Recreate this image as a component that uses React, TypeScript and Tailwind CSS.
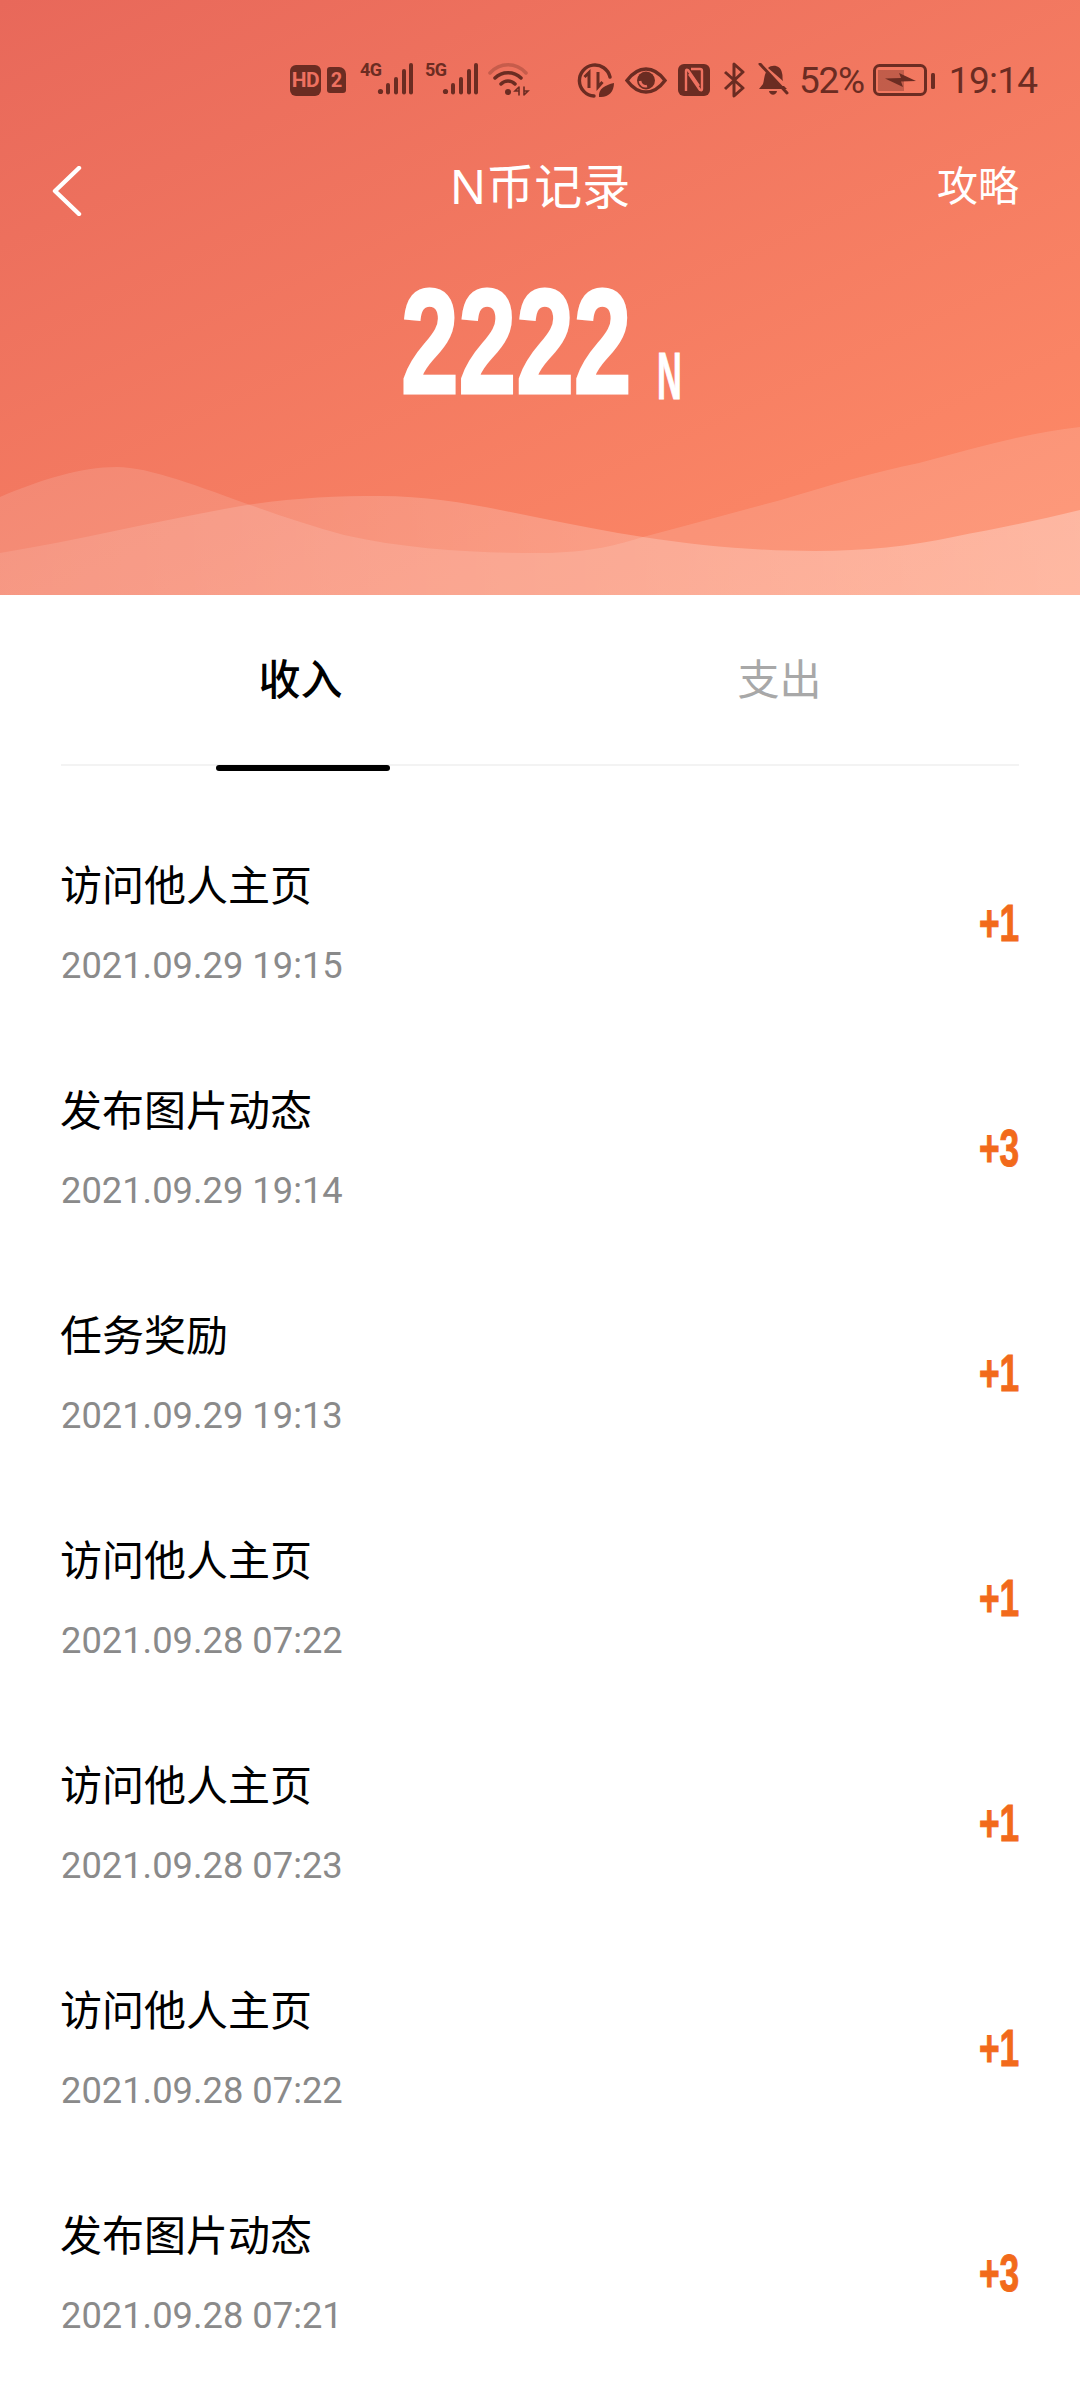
import React from 'react';

const records = [
  { title: '访问他人主页', time: '2021.09.29 19:15', value: '+1' },
  { title: '发布图片动态', time: '2021.09.29 19:14', value: '+3' },
  { title: '任务奖励', time: '2021.09.29 19:13', value: '+1' },
  { title: '访问他人主页', time: '2021.09.28 07:22', value: '+1' },
  { title: '访问他人主页', time: '2021.09.28 07:23', value: '+1' },
  { title: '访问他人主页', time: '2021.09.28 07:22', value: '+1' },
  { title: '发布图片动态', time: '2021.09.28 07:21', value: '+3' },
];

function Signal({ label }: { label: string }) {
  return (
    <div className="relative w-[53px] h-[32px]">
      <span className="absolute left-0 top-[-2px] font-['Roboto'] text-[18px] font-bold leading-[18px] tracking-[-0.5px]">{label}</span>
      <svg width="53" height="32" viewBox="0 0 53 32" fill="currentColor">
        <circle cx="20.5" cy="28.5" r="2.6" />
        <rect x="26" y="20" width="4" height="11.5" rx="2" />
        <rect x="34" y="14" width="4" height="17.5" rx="2" />
        <rect x="42" y="6" width="4" height="25.5" rx="2" />
        <rect x="49" y="0" width="4" height="31.5" rx="2" />
      </svg>
    </div>
  );
}

function Wifi() {
  return (
    <svg width="42" height="33" viewBox="0 0 42 33" fill="none" stroke="currentColor" strokeLinecap="round">
      <path d="M2 10 C12 -1 28 -1 38 10" strokeWidth="3.5" opacity="0.3" />
      <path d="M7 15 C14 8 26 8 33 15" strokeWidth="3.5" />
      <path d="M13 21 C17 17 23 17 27 21" strokeWidth="3.5" />
      <circle cx="20" cy="29" r="3" fill="currentColor" stroke="none" />
      <path d="M31 24 L27 28 L31 28 M31 24 V32 M36 24 V32 M36 32 L40 28 L36 28" strokeWidth="1.6" />
    </svg>
  );
}

function DataSaver() {
  return (
    <svg width="37" height="35" viewBox="0 0 37 35" fill="none" stroke="currentColor">
      <path d="M33 14 A15.5 15.5 0 1 0 17 33" strokeWidth="3.4" strokeLinecap="round" />
      <path d="M12 25 V10 M7.5 14 L12 9.5 L12 14 M21 9 V24 M25.5 19 L21 24 L21 19" strokeWidth="3" />
      <path d="M22 34 C21 26 28 22 37 20 C37 29 31 35 22 34 Z" fill="currentColor" stroke="none" />
    </svg>
  );
}

function Eye() {
  return (
    <svg width="42" height="27" viewBox="0 0 42 27" fill="none" stroke="currentColor">
      <path d="M2 13.5 C9 4 15 2 21 2 C27 2 33 4 40 13.5 C33 23 27 25 21 25 C15 25 9 23 2 13.5 Z" strokeWidth="3.4" />
      <circle cx="21" cy="13.5" r="9" fill="currentColor" stroke="none" />
      <path d="M15 14 C15.5 18 19 20 22 19" stroke="#ee7160" strokeWidth="2.6" />
    </svg>
  );
}

function Nfc() {
  return (
    <svg width="32" height="32" viewBox="0 0 32 32" fill="none">
      <rect width="32" height="32" rx="6" fill="currentColor" />
      <path d="M8 27 V7 Q8 5 10 6 L21 22 M13 5 H22 Q24 5 24 7 V25 Q24 27 22 26 L11 10" stroke="#ee7160" strokeWidth="2.4" strokeLinejoin="round" />
    </svg>
  );
}

function Bluetooth() {
  return (
    <svg width="22" height="36" viewBox="0 0 22 36" fill="none" stroke="currentColor" strokeWidth="3" strokeLinejoin="round">
      <path d="M2 10 L20 26 L11 34 V2 L20 10 L2 27" />
    </svg>
  );
}

function BellOff() {
  return (
    <svg width="32" height="33" viewBox="0 0 32 33" fill="currentColor">
      <path d="M9 9 L23 23 H27 L30 26 H2 L6 21 C7 18 7 13 9 9 Z" />
      <path d="M11 5 C15 1 24 2 25 10 C26 13 25 15 26 18 Z" />
      <path d="M12 28 H20 C19 33 13 33 12 28 Z" />
      <path d="M3 1 L30 30" fill="none" stroke="currentColor" strokeWidth="3" strokeLinecap="round" />
    </svg>
  );
}

function Battery() {
  return (
    <svg width="62" height="32" viewBox="0 0 62 32" fill="none" stroke="currentColor">
      <rect x="1.5" y="1.5" width="51" height="29" rx="5" strokeWidth="3" />
      <rect x="5" y="6" width="26" height="21" fill="currentColor" stroke="none" opacity="0.35" />
      <path d="M12 14.5 L28 14 L26 9 L43 17 L28 17.5 L30 23 Z" fill="currentColor" stroke="none" />
      <rect x="58" y="9" width="4" height="16" rx="1.5" fill="currentColor" stroke="none" />
    </svg>
  );
}

function StatusBar() {
  return (
    <div className="h-[130px] pt-[63px] pl-[290px] flex items-start text-[#6b2c22]">
      <div className="w-[31px] h-[31px] mt-[2px] rounded-[6px] bg-[#6b2c22] text-[#ee7160] font-['Roboto'] font-bold text-[21px] leading-[31px] text-center tracking-[-0.5px]">HD</div>
      <div className="w-[19px] h-[26px] mt-[4px] ml-[6px] rounded-[3px] rounded-tr-[7px] bg-[#6b2c22] text-[#ee7160] font-['Roboto'] font-bold text-[20px] leading-[26px] text-center">2</div>
      <div className="ml-[14px]"><Signal label="4G" /></div>
      <div className="ml-[12px]"><Signal label="5G" /></div>
      <div className="ml-[10px]"><Wifi /></div>
      <div className="ml-[47px]"><DataSaver /></div>
      <div className="ml-[11px] mt-[4px]"><Eye /></div>
      <div className="ml-[11px] mt-[1px]"><Nfc /></div>
      <div className="ml-[13px] -mt-[1px]"><Bluetooth /></div>
      <div className="ml-[12px]"><BellOff /></div>
      <div className="ml-[10px] font-['Roboto'] font-normal text-[37px] leading-[36px] tracking-[-1.3px]">52%</div>
      <div className="ml-[9px] mt-[1px]"><Battery /></div>
      <div className="ml-[14px] font-['Roboto'] font-normal text-[37px] leading-[36px] tracking-[-0.7px]">19:14</div>
    </div>
  );
}

function Waves() {
  return (
    <svg className="absolute left-0 top-0" width="1080" height="595" viewBox="0 0 1080 595">
      <defs>
        <linearGradient id="waveFront" x1="0" y1="0" x2="1" y2="0">
          <stop offset="0" stopColor="#ffffff" stopOpacity="0.1" />
          <stop offset="1" stopColor="#ffffff" stopOpacity="0.3" />
        </linearGradient>
      </defs>
      <path fill="#ffffff" fillOpacity="0.13" d="M0 497 C40 480 80 467 117 467 C165 467 250 510 344 535 C410 550 480 553 540 553 C590 553 620 544 643 537 C690 525 735 512 781 500 C830 485 875 472 919 463 C975 448 1030 432 1080 427 V595 H0 Z" />
      <path fill="url(#waveFront)" d="M0 553 C80 540 160 520 241 506 C290 498 335 496 379 496 C440 496 490 508 540 518 C575 525 610 532 643 537 C700 546 760 551 815 551 C865 551 910 546 953 537 C1000 528 1040 520 1080 510 V595 H0 Z" />
    </svg>
  );
}

function Header() {
  return (
    <div className="relative h-[595px] bg-[linear-gradient(155deg,#e8685a,#ff8c68)] overflow-hidden text-white">
      <Waves />
      <div className="relative">
        <StatusBar />
        <div className="relative h-[142px] flex items-start justify-center">
          <svg className="absolute left-[52px] top-[36px]" width="30" height="50" viewBox="0 0 30 50" fill="none" stroke="#ffffff" strokeWidth="4.4" strokeLinecap="round" strokeLinejoin="round">
            <path d="M27 2 L3 25 L27 48" />
          </svg>
          <div className="text-[48px] leading-[56px] font-normal mt-[28px]">N币记录</div>
          <div className="absolute right-[61px] top-[30px] text-[41px] leading-[50px]">攻略</div>
        </div>
        <div className="flex justify-center items-end h-[140px] pl-[2px] font-['Liberation_Sans'] font-bold whitespace-nowrap">
          <span className="inline-block w-[228px] origin-left scale-x-[0.7] text-[148px] leading-[140px] [-webkit-text-stroke:3px_#ffffff]">2222</span>
          <span className="inline-block w-[24px] ml-[28px] mb-[6px] origin-left scale-x-[0.52] text-[66px] leading-[60px] [-webkit-text-stroke:1px_#ffffff]">N</span>
        </div>
      </div>
    </div>
  );
}

function Tabs() {
  return (
    <div className="relative mx-[61px] h-[171px] grid grid-cols-2 border-b-[2px] border-[#f3f3f3] text-[42px] font-['Noto_Sans_CJK_SC',sans-serif]">
      <div className="pt-[54px] text-center leading-[56px] font-medium text-black">收入</div>
      <div className="pt-[54px] text-center leading-[56px] text-[#a8a8a8]">支出</div>
      <div className="absolute left-[155px] bottom-[-7px] w-[174px] h-[6px] rounded-full bg-black" />
    </div>
  );
}

function Row({ title, time, value }: { title: string; time: string; value: string }) {
  return (
    <div className="h-[225px] flex items-center justify-between">
      <div className="flex flex-col pb-[3px]">
        <div className="-ml-[1px] text-[42px] leading-[56px] text-black font-['Noto_Sans_CJK_SC',sans-serif]">{title}</div>
        <div className="mt-[33px] text-[36.3px] leading-[44px] text-[#8a8a8a] font-['Roboto']">{time}</div>
      </div>
      <div className="w-[40px] flex justify-end font-['Liberation_Sans'] font-bold text-[#f26a1b] whitespace-nowrap">
        <span className="origin-right scale-x-[0.68] text-[52px] leading-[60px] [-webkit-text-stroke:1px_#f26a1b]">{value}</span>
      </div>
    </div>
  );
}

export default function App() {
  return (
    <div className="w-[1080px] h-[2400px] bg-white overflow-hidden font-['Noto_Sans','Noto_Sans_CJK_SC',sans-serif]">
      <Header />
      <Tabs />
      <div className="px-[61px] pt-[44px]">
        {records.map((r, i) => (
          <Row key={i} title={r.title} time={r.time} value={r.value} />
        ))}
      </div>
    </div>
  );
}
